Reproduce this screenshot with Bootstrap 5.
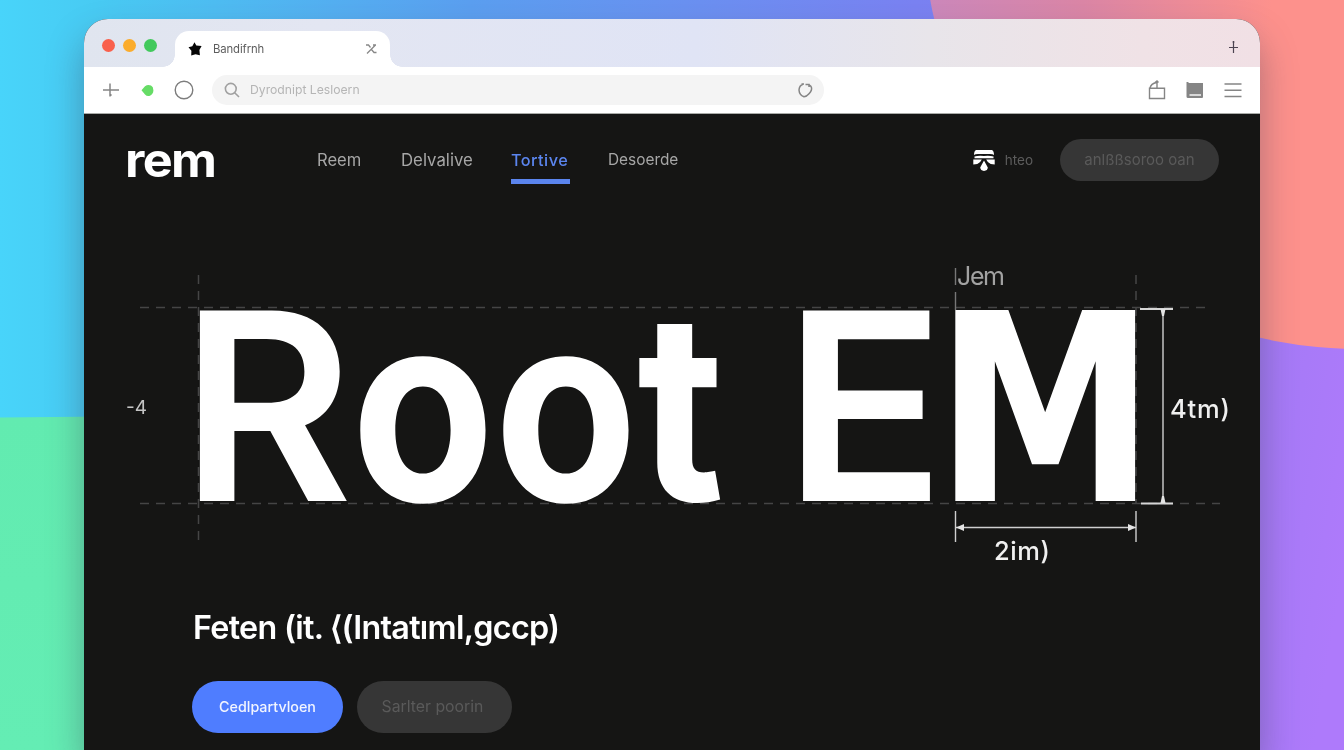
<!DOCTYPE html>
<html lang="en">
<head>
<meta charset="utf-8">
<title>Root EM</title>
<link rel="stylesheet" href="https://cdn.jsdelivr.net/npm/bootstrap@5.3.0/dist/css/bootstrap.min.css">
<style>
  body { font-family: Inter, "Liberation Sans", sans-serif; background: #4bcff5; height: 750px; overflow: hidden; }
  .backdrop { z-index: -1; }
  .browser { width: 1176px; height: 731px; margin: 19px 0 0 84px; border-radius: 24px 24px 0 0; background: #151514; box-shadow: 0 20px 36px rgba(60,60,80,.4); overflow: hidden; }
  .tabstrip { height: 48px; padding: 12px 20px 0 18px; background: linear-gradient(90deg, #e0e5ef 0, #e3e6f2 20%, #e0e4f5 52%, #e8e5ea 72%, #f0e2e6 90%, #f1e0e5 100%); }
  .light { width: 13px; height: 13px; border-radius: 50%; margin-right: 8px; }
  .tab-item { position: relative; width: 215px; height: 36px; margin-left: 10px; padding: 0 13px 0 13px; background: #fff; border-radius: 14px 14px 0 0; font-size: 11.3px; color: #5d5d5d; letter-spacing: -.1px; }
  .tab-item::before, .tab-item::after { content: ""; position: absolute; bottom: 0; width: 12px; height: 12px; }
  .tab-item::before { left: -12px; background: radial-gradient(circle at 0 0, transparent 11.5px, #fff 12px); }
  .tab-item::after { right: -12px; background: radial-gradient(circle at 100% 0, transparent 11.5px, #fff 12px); }
  .toolbar { height: 47px; padding: 0 18px 0 18px; background: #fff; border-bottom: 1px solid #a9aba8; }
  .address { width: 612px; height: 30px; margin-left: 18px; padding: 0 10px 0 12px; background: #f4f4f4; border-radius: 15px; font-size: 12.2px; color: #b5b5b5; }
  .site-nav { height: 92px; padding: 0 41px 0 41px; }
  .wordmark { width: 190px; font-size: 47.500px; font-weight: 700; line-height: 1; letter-spacing: -1.500px; color: #fff; margin-top: 0; }
  .wordmark span { display: inline-block; transform: scaleX(1.060); transform-origin: 0 50%; }
  .menu a { font-size: 16.3px; line-height: 20px; color: #a6a6a6; text-decoration: none; padding-bottom: 9px; border-bottom: 5px solid transparent; margin-right: 39px; margin-top: 13px; white-space: nowrap; }
  .menu a.current { color: #5b85ee; border-color: #5b85ee; font-weight: 500; letter-spacing: .45px; }
  .menu a:nth-child(1) { width: 45px; margin-left: 2px; font-size: 16.6px; }
  .menu a:nth-child(2) { width: 71px; font-size: 16.8px; }
  .menu a:nth-child(3) { width: 59px; }
  .menu a:nth-child(4) { font-size: 15.4px; margin-left: -1px; }
  .lang { font-size: 13.5px; color: #5c5c5c; margin-right: 27px; }
  .pill { border: 0; border-radius: 30px; display: flex; align-items: center; justify-content: center; background: #363636; color: #5a5a5a; padding: 0; white-space: nowrap; }
  .pill-nav { width: 159px; height: 42px; font-size: 15px; }
  .diagram { display: block; width: 1176px; height: 384px; }
  .guide { stroke: #454545; stroke-width: 1.5; stroke-dasharray: 9 7; fill: none; }
  .measure { stroke: #d6d6d6; stroke-width: 2; fill: none; }
  .measure-thin { stroke: #cfcfcf; stroke-width: 1.4; fill: none; }
  .glyph { font: 700 262px Inter, sans-serif; fill: #fff; }
  .glyph-cap { font-weight: 600; }
  .glyph-m { font: 700 262px "DejaVu Sans Condensed", "DejaVu Sans", sans-serif; font-stretch: condensed; fill: #fff; }
  .note { font-size: 25.5px; fill: #f0f0f0; font-weight: 500; }
  .lead-copy { padding-left: 108px; padding-top: 16px; }
  .lead-copy h1 { font-size: 32.3px; font-weight: 600; color: #fff; line-height: 44px; margin: 0 0 31px 1px; white-space: nowrap; letter-spacing: -.7px; }
  .cta { width: 151px; height: 52px; background: #4f7dff; color: #f2f5ff; font-size: 14.3px; font-weight: 500; }
  .cta-alt { width: 155px; height: 52px; font-size: 15.8px; padding-right: 4px; }
</style>
</head>
<body>
<svg class="backdrop position-fixed top-0 start-0" width="1344" height="750" viewBox="0 0 1344 750" aria-hidden="true">
  <defs>
    <linearGradient id="sky"><stop offset="0" stop-color="#48d4fa"/><stop offset=".07" stop-color="#48cbf3"/><stop offset=".35" stop-color="#5b9ff0"/><stop offset=".68" stop-color="#7a82f2"/><stop offset="1" stop-color="#8878f0"/></linearGradient>
    <linearGradient id="coral" gradientUnits="userSpaceOnUse" x1="930" x2="1270" y1="0" y2="30"><stop offset="0" stop-color="#cc88bb"/><stop offset=".45" stop-color="#db86a6"/><stop offset="1" stop-color="#fd918c"/></linearGradient>
    <linearGradient id="violet" x2="1" y2=".6"><stop offset="0" stop-color="#a07af4"/><stop offset="1" stop-color="#ae7afb"/></linearGradient>
    <linearGradient id="mint" x2="0" y2="1"><stop offset="0" stop-color="#62ebb0"/><stop offset="1" stop-color="#64edb4"/></linearGradient>
  </defs>
  <rect width="1344" height="750" fill="url(#sky)"/>
  <path d="M0 417.500L110 416.500V750H0Z" fill="url(#mint)"/>
  <rect x="1220" y="300" width="124" height="450" fill="url(#violet)"/>
  <ellipse cx="1360" cy="-71" rx="436" ry="420" fill="url(#coral)"/>
</svg>

<main class="browser">
  <div class="tabstrip d-flex">
    <div class="d-flex pt-2">
      <span class="light" style="background:#f9604c"></span><span class="light" style="background:#fbac2c"></span><span class="light" style="background:#42c95c"></span>
    </div>
    <div class="tab-item d-flex align-items-center">
      <svg width="14" height="14" viewBox="0 0 14 14"><path d="M6.500.3l1.800 3.200 5.300.5-2.200 4 .5 5.300-4.400-1-4.300 1.200.2-4.700L.5 5.200l3.800-1z" fill="#050505"/></svg>
      <span style="margin-left:11px">Bandifrnh</span>
      <svg class="ms-auto" width="12" height="12" viewBox="0 0 12 12" fill="none" stroke="#888" stroke-width="1.300"><path d="M1 2h2.500l2 2.500M10.500 2L2 10.500M8 2h3M6.500 6.500l2.500 3h2.500"/></svg>
    </div>
    <svg class="ms-auto" style="margin-top:8px" width="13" height="16" viewBox="0 0 13 16" stroke="#4c4350" stroke-width="1.200"><path d="M2 8.500h9M6.500 2v12M5.500 3h2"/></svg>
  </div>

  <div class="toolbar d-flex align-items-center">
    <svg width="18" height="18" viewBox="0 0 18 18" fill="none" stroke="#858585" stroke-width="1.500"><path d="M1 9h16M8 2.500v13M8 15l1.500-1.500"/></svg>
    <svg style="margin-left:21px" width="13" height="13" viewBox="0 0 13 13"><path d="M.5 6.200L4 2.200q3-2.300 6-.6Q12.500 3 12.400 6.500T9 11.700q-3 .9-5-1.300z" fill="#66dc66"/></svg>
    <svg style="margin-left:20px" width="20" height="20" viewBox="0 0 20 20"><circle cx="10" cy="10" r="8.800" fill="none" stroke="#7d7d7d" stroke-width="1.400"/></svg>
    <div class="address d-flex align-items-center">
      <svg width="16" height="16" viewBox="0 0 16 16" fill="none" stroke="#a0a0a0" stroke-width="1.600"><circle cx="6.800" cy="6.800" r="5.400"/><path d="M10.700 10.700l4.300 4.300"/></svg>
      <span style="margin-left:10px">Dyrodnipt Lesloern</span>
      <svg class="ms-auto" width="17" height="17" viewBox="0 0 17 17" fill="none" stroke="#858585" stroke-width="1.500"><path d="M6 2.200Q2.300 3.500 2 8q.3 5 5 6.800 2.400 0 5-3 3.200-3.600 2.500-6.200-.3-1.500-2-2.300M4.500 2h2.500M8.500 2.500h3.500v2.500"/></svg>
    </div>
    <svg class="ms-auto" width="18" height="20" viewBox="0 0 18 20" fill="none" stroke="#858585" stroke-width="1.400"><path d="M1.500 8.200h15v10.300h-15zM2 8q1-4.500 6.500-5.500M9 1v6.500M7 2.500L9 1l1.500 1.500"/></svg>
    <svg style="margin-left:20px" width="18" height="18" viewBox="0 0 18 18"><path d="M.5 1h1.500l1 1h14v14q0 1-1 1H2q-1.500 0-1.500-1.500z" fill="#858585"/><path d="M3.500 14h11.500" stroke="#f4f4f4" stroke-width="1.500"/></svg>
    <svg style="margin-left:20px" width="18" height="18" viewBox="0 0 18 18" stroke="#858585" stroke-width="1.500"><path d="M.5 3h17M.5 9.300h17M.5 15.500h17"/></svg>
  </div>

  <nav class="site-nav d-flex align-items-center">
    <div class="wordmark"><span>rem</span></div>
    <div class="menu d-flex">
      <a href="#">Reem</a><a href="#">Delvalive</a><a href="#" class="current">Tortive</a><a href="#">Desoerde</a>
    </div>
    <svg class="ms-auto" width="22" height="23" viewBox="0 0 22 23" fill="#fff"><path d="M3 1h16q2 1 2 5-1-1-4-1H5q-3 0-4 1Q1 2 3 1zM1.500 7.500Q5 6.500 11 7q6-.5 9.500.5v1.700H1.500zM.3 10.500h8.500q-1.500 3.500-4.500 4.500L.3 15.500zM13.200 10.500h8.500v5l-4-.5q-3-1-4.500-4.500zM11 11.500l3.800 7q0 3-3.800 3.500-3.500-.5-3.800-3.500z"/></svg>
    <span class="lang" style="margin-left:10px">hteo</span>
    <button class="btn pill pill-nav">anlßßsoroo oan</button>
  </nav>

  <svg class="diagram" viewBox="84 206 1176 384">
    <path class="guide" d="M140 307.500H1208M140 503.500H1220M198.500 275V542"/>
    <path class="guide" d="M1136 275V504"/>
    <path class="measure-thin" style="stroke:#777" d="M955.500 268V285M955.500 292V310"/>
    <g class="glyph">
      <text class="glyph-cap" transform="translate(180.500 501) scale(1.010 1)">R</text>
      <text transform="translate(351 501) scale(.895 1)">o</text>
      <text transform="translate(494 501) scale(.895 1)">o</text>
      <text transform="translate(637 501) scale(.91 1)">t</text>
      <text class="glyph-cap" transform="translate(783.500 501) scale(1.020 1)">E</text>
    </g>
    <text class="glyph-m" transform="translate(935 501) scale(.94 1)">M</text>
    <path class="measure" d="M1140 309H1173M1141 503.500H1173"/>
    <path class="measure-thin" d="M1163 309V503M955.500 511V542M1136 511V542M956 527.500H1136"/>
    <path d="M956 527.500l8-3.500v7zM1136 527.500l-8-3.500v7zM1160.500 309h5l-1.500 7h-2zM1160.500 503h5l-1.500-7h-2z" fill="#e4e4e4"/>
    <text class="note" x="957" y="285" style="fill:#a2a2a2;font-size:25px;font-weight:400" textLength="48">Jem</text>
    <text class="note" x="1170" y="418" textLength="60">4tm)</text>
    <text class="note" x="994" y="560" textLength="56">2im)</text>
    <text x="126" y="414" font-size="19" fill="#c4c4c4" textLength="21">-4</text>
  </svg>

  <section class="lead-copy">
    <h1>Feten (it. ⟨(Intatıml,gccp)</h1>
    <div class="d-flex">
      <button class="btn pill cta">Cedlpartvloen</button>
      <button class="btn pill cta-alt" style="margin-left:14px">Sarlter poorin</button>
    </div>
  </section>
</main>
<script src="https://cdn.jsdelivr.net/npm/bootstrap@5.3.0/dist/js/bootstrap.bundle.min.js"></script>
</body>
</html>
